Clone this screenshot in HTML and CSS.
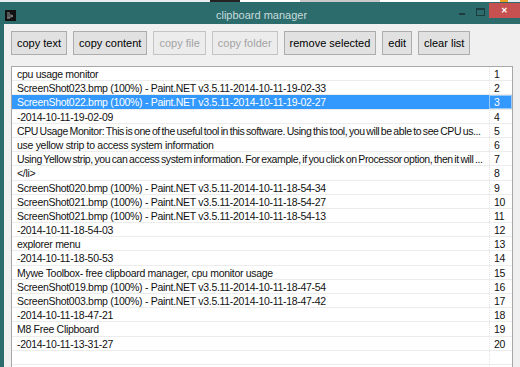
FILE: index.html
```html
<!DOCTYPE html>
<html lang="en">
<head>
    <meta charset="UTF-8">
    <title>clipboard manager</title>
    <link rel="stylesheet" href="styles.css">
</head>
<body>
    <div class="strip">
        <span class="seg dark" style="width: 30px;"></span>
        <span class="seg white" style="width: 60px;"></span>
        <span class="seg grey" style="width: 80px;"></span>
        <span class="seg white" style="width: 120px;"></span>
        <span class="seg orange" style="width: 8px;"></span>
    </div>
    <div class="window">
        <div class="titlebar">
            <div class="appicon">
                <svg width="11" height="11" viewBox="0 0 11 11">
                    <rect width="11" height="11" fill="#111"/>
                    <path d="M2 3h3M2 5h4l2 1-2 1H2M2 8h3" stroke="#9a9a9a" stroke-width="1" fill="none"/>
                </svg>
            </div>
            <div class="title">clipboard manager</div>
            <div class="controls">
                <span class="ctl min"></span>
                <span class="ctl max"></span>
                <span class="ctl close">&#x2715;</span>
            </div>
        </div>
        <div class="client">
            <div class="toolbar">
                <button class="btn">copy text</button>
                <button class="btn">copy content</button>
                <button class="btn" disabled>copy file</button>
                <button class="btn" disabled>copy folder</button>
                <button class="btn">remove selected</button>
                <button class="btn">edit</button>
                <button class="btn">clear list</button>
            </div>
            <div class="list">
                <div class="row"><span class="txt">cpu usage monitor</span><span class="num">1</span></div>
                <div class="row"><span class="txt">ScreenShot023.bmp (100%) - Paint.NET v3.5.11-2014-10-11-19-02-33</span><span class="num">2</span></div>
                <div class="row selected"><span class="txt">ScreenShot022.bmp (100%) - Paint.NET v3.5.11-2014-10-11-19-02-27</span><span class="num">3</span></div>
                <div class="row"><span class="txt">-2014-10-11-19-02-09</span><span class="num">4</span></div>
                <div class="row"><span class="txt long">CPU Usage Monitor: This is one of the useful tool in this software. Using this tool, you will be able to see CPU us...</span><span class="num">5</span></div>
                <div class="row"><span class="txt">use yellow strip to access system information</span><span class="num">6</span></div>
                <div class="row"><span class="txt long">Using Yellow strip, you can access system information. For example, if you click on Processor option, then it will ...</span><span class="num">7</span></div>
                <div class="row"><span class="txt">&lt;/li&gt;</span><span class="num">8</span></div>
                <div class="row"><span class="txt">ScreenShot020.bmp (100%) - Paint.NET v3.5.11-2014-10-11-18-54-34</span><span class="num">9</span></div>
                <div class="row"><span class="txt">ScreenShot021.bmp (100%) - Paint.NET v3.5.11-2014-10-11-18-54-27</span><span class="num">10</span></div>
                <div class="row"><span class="txt">ScreenShot021.bmp (100%) - Paint.NET v3.5.11-2014-10-11-18-54-13</span><span class="num">11</span></div>
                <div class="row"><span class="txt">-2014-10-11-18-54-03</span><span class="num">12</span></div>
                <div class="row"><span class="txt">explorer menu</span><span class="num">13</span></div>
                <div class="row"><span class="txt">-2014-10-11-18-50-53</span><span class="num">14</span></div>
                <div class="row"><span class="txt">Mywe Toolbox- free clipboard manager, cpu monitor usage</span><span class="num">15</span></div>
                <div class="row"><span class="txt">ScreenShot019.bmp (100%) - Paint.NET v3.5.11-2014-10-11-18-47-54</span><span class="num">16</span></div>
                <div class="row"><span class="txt">ScreenShot003.bmp (100%) - Paint.NET v3.5.11-2014-10-11-18-47-42</span><span class="num">17</span></div>
                <div class="row"><span class="txt">-2014-10-11-18-47-21</span><span class="num">18</span></div>
                <div class="row"><span class="txt">M8 Free Clipboard</span><span class="num">19</span></div>
                <div class="row"><span class="txt">-2014-10-11-13-31-27</span><span class="num">20</span></div>
                <div class="row empty"><span class="txt"></span><span class="num"></span></div>
                <div class="row empty"><span class="txt"></span><span class="num"></span></div>
            </div>
        </div>
    </div>
</body>
</html>
```

FILE: styles.css
```css
body{
    margin: 0;
    width: 520px;
    height: 367px;
    overflow: hidden;
    background-color: #2d6c6d;
    font-family: "Liberation Sans", Arial, sans-serif;
}

.strip{
    display: flex;
    height: 2px;
    background-color: #e8ecef;
    padding-left: 210px;
}
.seg{
    display: block;
    height: 2px;
}
.seg.dark{ background-color: #222; }
.seg.white{ background-color: #fff; }
.seg.grey{ background-color: #c9c9c9; }
.seg.orange{ background-color: #f0a020; }

.window{
    padding-left: 4px;
}

.titlebar{
    display: flex;
    align-items: flex-start;
    height: 22px;
    margin-left: -4px;
}
.appicon{
    width: 11px;
    height: 11px;
    margin: 5px 0 0 5px;
}
.title{
    flex: 1;
    text-align: center;
    color: #c7dcdc;
    font-size: 11px;
    line-height: 11px;
    margin-top: 8px;
    padding-left: 48px;
}
.controls{
    display: flex;
    align-items: flex-start;
}
.ctl{
    display: block;
}
.ctl.min{
    width: 6px;
    height: 2px;
    background-color: #1d3c3d;
    margin: 11px 11px 0 0;
}
.ctl.max{
    width: 7px;
    height: 5px;
    border: 1px solid #1d3c3d;
    border-top-width: 2px;
    margin: 6px 4px 0 0;
}
.ctl.close{
    width: 31px;
    height: 15px;
    margin-top: 1px;
    background-color: #c75050;
    color: #fff;
    font-size: 8px;
    font-weight: bold;
    line-height: 15px;
    text-align: center;
}

.client{
    background-color: #f0f0f0;
    height: 345px;
    padding: 7px 0 0 7px;
}

.toolbar{
    display: flex;
    gap: 6px;
}
.btn{
    height: 24px;
    padding: 0 5px;
    border: 1px solid #adadad;
    background-color: #e1e1e1;
    font-family: "Liberation Sans", Arial, sans-serif;
    font-size: 11px;
    color: #000;
}
.btn:disabled{
    color: #a3a3a3;
    border-color: #c4c4c4;
    background-color: #ececec;
}

.list{
    margin-top: 11px;
    width: 500px;
    border: 1px solid #a8a8a8;
    background-color: #fff;
    font-size: 10.5px;
    letter-spacing: -0.3px;
    color: #111;
}
.row{
    display: flex;
    height: 14.2px;
    line-height: 14px;
    border-bottom: 1px solid #ececec;
    box-sizing: border-box;
}
.txt{
    width: 472px;
    padding-left: 5px;
    white-space: nowrap;
    overflow: hidden;
}
.txt.long{
    letter-spacing: -0.4px;
    word-spacing: -0.9px;
}
.num{
    flex: 1;
    padding-left: 4px;
    border-left: 1px dotted #e4e4e4;
}
.row.selected{
    background-color: #3399ff;
    color: #fff;
}
.row.selected .num{
    outline: 1px solid #9cc9f5;
    outline-offset: -1px;
}
```
